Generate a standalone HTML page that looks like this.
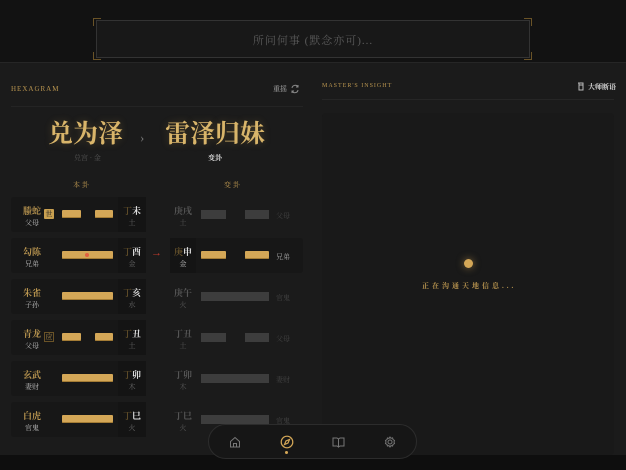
<!DOCTYPE html>
<html><head><meta charset="utf-8"><style>
*{margin:0;padding:0;box-sizing:border-box}
body{width:626px;height:470px;background:#121212;position:relative;overflow:hidden;font-family:"Liberation Serif","Noto Serif CJK SC",serif;color:#ccc}
.a{position:absolute}
.gold{color:#b8944f}
.bar{position:absolute;height:8px;background:#d4a757;border-radius:1px;box-shadow:inset 0 -1px 0 #a47c35}
.gb{position:absolute;height:9px;background:#3d3d3d}
.card{position:absolute;background:#171717;border-radius:3px}
.lab{position:absolute;background:#141414}
.nm{position:absolute;font-size:9px;font-weight:bold;color:#b8944f;text-align:center;width:30px}
.lq{position:absolute;font-size:7px;color:#bbb;text-align:center;width:30px}
.gz{position:absolute;font-size:9px;font-weight:bold;text-align:center;width:26px;color:#ddd}
.gz span{color:#8a6d35;font-weight:normal}
.wx{position:absolute;font-size:7px;color:#666;text-align:center;width:26px}
.dim{color:#555!important}
.ttl{position:absolute;font-size:25px;line-height:25px;font-weight:bold;color:#d9b56a;font-family:'Noto Serif CJK SC',serif;text-shadow:0 0 8px rgba(200,160,80,.3)}
</style></head><body>
<div class="a" style="left:96px;top:20px;width:434px;height:38px;border:1px solid #333;background:#181818"></div>
<div class="a" style="left:93px;top:18px;width:8px;height:8px;border-left:1px solid #6a5327;border-top:1px solid #6a5327"></div>
<div class="a" style="left:93px;top:52px;width:8px;height:8px;border-left:1px solid #6a5327;border-bottom:1px solid #6a5327"></div>
<div class="a" style="left:524px;top:18px;width:8px;height:8px;border-right:1px solid #6a5327;border-top:1px solid #6a5327"></div>
<div class="a" style="left:524px;top:52px;width:8px;height:8px;border-right:1px solid #6a5327;border-bottom:1px solid #6a5327"></div>
<div class="a" style="left:96px;top:32px;width:434px;text-align:center;font-size:11px;color:#5a5a5a;letter-spacing:1px">所问何事 (默念亦可)...</div>
<div class="a" style="left:0;top:62px;width:626px;height:393px;background:#1b1b1b;border-top:1px solid #262626"></div>
<div class="a" style="left:0;top:455px;width:626px;height:15px;background:#0e0e0e"></div>
<div class="a gold" style="left:11px;top:85px;font-size:7px;letter-spacing:1px">HEXAGRAM</div>
<div class="a" style="left:273px;top:84px;font-size:7px;color:#aaa">重摇</div>
<svg class="a" style="left:290px;top:84px" width="10" height="10" viewBox="0 0 10 10" fill="none" stroke="#888" stroke-width="1"><path d="M2 4a3.2 3.2 0 0 1 6-1M8 6a3.2 3.2 0 0 1-6 1M8 1v2h-2M2 9v-2h2"/></svg>
<div class="a" style="left:11px;top:106px;width:292px;height:1px;background:#242424"></div>
<div class="ttl" style="left:48px;top:120px">兑为泽</div>
<div class="a" style="left:74px;top:153px;font-size:7px;color:#555">兑宫 · 金</div>
<div class="a" style="left:140px;top:130px;font-size:13px;color:#777">›</div>
<div class="ttl" style="left:165px;top:120px">雷泽归妹</div>
<div class="a" style="left:208px;top:153px;font-size:7px;color:#ddd;font-weight:bold">变卦</div>
<div class="a gold" style="left:73px;top:180px;font-size:7px;letter-spacing:2px">本卦</div>
<div class="a gold" style="left:224px;top:180px;font-size:7px;letter-spacing:2px">变卦</div>

<div class="card" style="left:11px;top:197px;width:135px;height:35px"></div><div class="lab" style="left:118px;top:197px;width:28px;height:35px"></div>
<div class="nm" style="left:17px;top:204px">螣蛇</div><div class="lq" style="left:17px;top:218px">父母</div>
<div class="a" style="left:44px;top:209px;width:10px;height:10px;background:#c9a050;color:#222;font-size:7px;text-align:center;line-height:10px;border-radius:1px">世</div>
<div class="bar" style="left:62px;top:210px;width:19px"></div><div class="bar" style="left:95px;top:210px;width:18px"></div>
<div class="gz" style="left:119px;top:204px"><span>丁</span>未</div><div class="wx" style="left:119px;top:218px">土</div>
<div class="gz dim" style="left:170px;top:204px">庚戌</div><div class="wx dim" style="left:170px;top:218px">土</div>
<div class="gb" style="left:201px;top:210px;width:25px"></div><div class="gb" style="left:245px;top:210px;width:24px"></div>
<div class="a" style="left:276px;top:211px;font-size:7px;color:#444">父母</div>

<div class="card" style="left:11px;top:238px;width:135px;height:35px"></div><div class="lab" style="left:118px;top:238px;width:28px;height:35px"></div>
<div class="card" style="left:170px;top:238px;width:133px;height:35px"></div><div class="lab" style="left:170px;top:238px;width:26px;height:35px"></div>
<div class="nm" style="left:17px;top:245px">勾陈</div><div class="lq" style="left:17px;top:259px">兄弟</div>
<div class="bar" style="left:62px;top:251px;width:51px"></div><div class="a" style="left:85px;top:253px;width:4px;height:4px;border-radius:50%;background:#e06040"></div>
<div class="gz" style="left:119px;top:245px"><span>丁</span>酉</div><div class="wx" style="left:119px;top:259px">金</div>
<div class="a" style="left:151px;top:247px;font-size:11px;color:#c0392b">→</div>
<div class="gz" style="left:170px;top:245px"><span>庚</span>申</div><div class="wx" style="left:170px;top:259px;color:#bbb">金</div>
<div class="bar" style="left:201px;top:251px;width:25px"></div><div class="bar" style="left:245px;top:251px;width:24px"></div>
<div class="a" style="left:276px;top:252px;font-size:7px;color:#aaa">兄弟</div>

<div class="card" style="left:11px;top:279px;width:135px;height:35px"></div><div class="lab" style="left:118px;top:279px;width:28px;height:35px"></div>
<div class="nm" style="left:17px;top:286px">朱雀</div><div class="lq" style="left:17px;top:300px">子孙</div>
<div class="bar" style="left:62px;top:292px;width:51px"></div>
<div class="gz" style="left:119px;top:286px"><span>丁</span>亥</div><div class="wx" style="left:119px;top:300px">水</div>
<div class="gz dim" style="left:170px;top:286px">庚午</div><div class="wx dim" style="left:170px;top:300px">火</div>
<div class="gb" style="left:201px;top:292px;width:68px"></div>
<div class="a" style="left:276px;top:293px;font-size:7px;color:#444">官鬼</div>

<div class="card" style="left:11px;top:320px;width:135px;height:35px"></div><div class="lab" style="left:118px;top:320px;width:28px;height:35px"></div>
<div class="nm" style="left:17px;top:327px">青龙</div><div class="lq" style="left:17px;top:341px">父母</div>
<div class="a" style="left:44px;top:332px;width:10px;height:10px;border:1px solid #6a5327;color:#b8944f;font-size:7px;text-align:center;line-height:8px">应</div>
<div class="bar" style="left:62px;top:333px;width:19px"></div><div class="bar" style="left:95px;top:333px;width:18px"></div>
<div class="gz" style="left:119px;top:327px"><span>丁</span>丑</div><div class="wx" style="left:119px;top:341px">土</div>
<div class="gz dim" style="left:170px;top:327px">丁丑</div><div class="wx dim" style="left:170px;top:341px">土</div>
<div class="gb" style="left:201px;top:333px;width:25px"></div><div class="gb" style="left:245px;top:333px;width:24px"></div>
<div class="a" style="left:276px;top:334px;font-size:7px;color:#444">父母</div>

<div class="card" style="left:11px;top:361px;width:135px;height:35px"></div><div class="lab" style="left:118px;top:361px;width:28px;height:35px"></div>
<div class="nm" style="left:17px;top:368px">玄武</div><div class="lq" style="left:17px;top:382px">妻财</div>
<div class="bar" style="left:62px;top:374px;width:51px"></div>
<div class="gz" style="left:119px;top:368px"><span>丁</span>卯</div><div class="wx" style="left:119px;top:382px">木</div>
<div class="gz dim" style="left:170px;top:368px">丁卯</div><div class="wx dim" style="left:170px;top:382px">木</div>
<div class="gb" style="left:201px;top:374px;width:68px"></div>
<div class="a" style="left:276px;top:375px;font-size:7px;color:#444">妻财</div>

<div class="card" style="left:11px;top:402px;width:135px;height:35px"></div><div class="lab" style="left:118px;top:402px;width:28px;height:35px"></div>
<div class="nm" style="left:17px;top:409px">白虎</div><div class="lq" style="left:17px;top:423px">官鬼</div>
<div class="bar" style="left:62px;top:415px;width:51px"></div>
<div class="gz" style="left:119px;top:409px"><span>丁</span>巳</div><div class="wx" style="left:119px;top:423px">火</div>
<div class="gz dim" style="left:170px;top:409px">丁巳</div><div class="wx dim" style="left:170px;top:423px">火</div>
<div class="gb" style="left:201px;top:415px;width:68px"></div>
<div class="a" style="left:276px;top:416px;font-size:7px;color:#444">官鬼</div>

<div class="a gold" style="left:322px;top:83px;font-size:6px;letter-spacing:1px">MASTER'S INSIGHT</div>
<svg class="a" style="left:577px;top:82px" width="8" height="9" viewBox="0 0 8 9" fill="none" stroke="#bbb" stroke-width="1"><path d="M1 1h5v7H2V3h4M2 1v7"/></svg>
<div class="a" style="left:588px;top:82px;font-size:7px;color:#ddd;font-weight:bold">大师断语</div>
<div class="a" style="left:322px;top:99px;width:292px;height:1px;background:#262626"></div>
<div class="a" style="left:322px;top:113px;width:292px;height:342px;background:#191919;border-radius:4px"></div>
<div class="a" style="left:464px;top:259px;width:9px;height:9px;border-radius:50%;background:#d4a757;box-shadow:0 0 8px rgba(212,167,87,.6)"></div>
<div class="a gold" style="left:422px;top:281px;font-size:7px;letter-spacing:3px;font-weight:bold">正在沟通天地信息...</div>

<div class="a" style="left:208px;top:424px;width:209px;height:35px;border-radius:18px;background:#161616;border:1px solid #2c2c2c"></div>
<svg class="a" style="left:229px;top:436px" width="12" height="12" viewBox="0 0 12 12" fill="none" stroke="#777" stroke-width="1"><path d="M1.5 5.5L6 1.5l4.5 4V11h-9z M4.5 11V7.5h3V11"/></svg>
<svg class="a" style="left:280px;top:435px" width="14" height="14" viewBox="0 0 14 14" fill="none" stroke="#d4a757" stroke-width="1.2"><circle cx="7" cy="7" r="5.8"/><path d="M9.5 4.5L8 8 4.5 9.5 6 6z"/></svg>
<div class="a" style="left:285px;top:451px;width:3px;height:3px;border-radius:50%;background:#d4a757"></div>
<svg class="a" style="left:332px;top:436px" width="13" height="12" viewBox="0 0 13 12" fill="none" stroke="#777" stroke-width="1"><path d="M1 2h4l1.5 1V11L5 10H1zM12 2H8L6.5 3V11L8 10h4z"/></svg>
<svg class="a" style="left:384px;top:436px" width="12" height="12" viewBox="0 0 12 12" fill="none" stroke="#777" stroke-width="1"><circle cx="6" cy="6" r="2"/><path d="M6 1l1 1.3 1.6-.4.4 1.6L10.5 4.5 10 6l.5 1.5-1.5.9-.4 1.6-1.6-.4L6 11l-1-1.4-1.6.4-.4-1.6L1.5 7.5 2 6l-.5-1.5L3 3.6l.4-1.6 1.6.4z"/></svg>
</body></html>
